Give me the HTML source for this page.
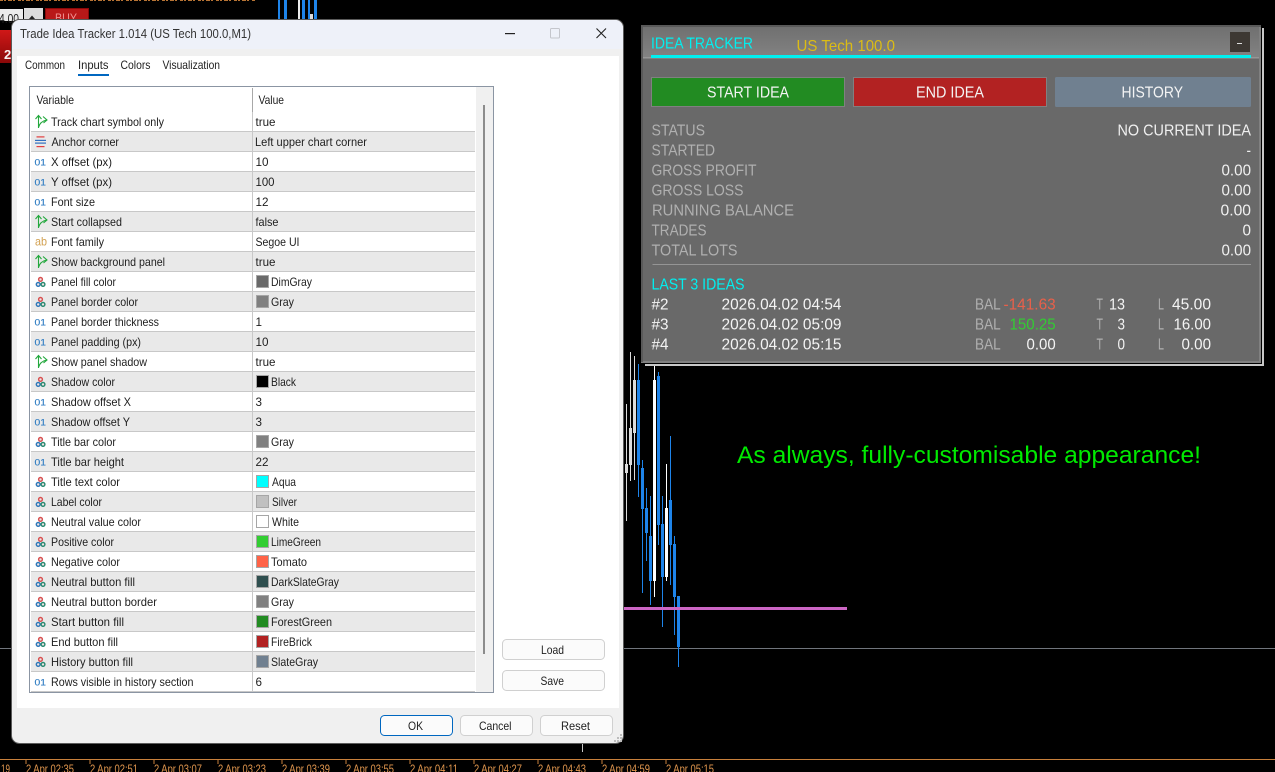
<!DOCTYPE html>
<html lang="en"><head><meta charset="utf-8"><title>Trade Idea Tracker</title>
<style>
html,body{margin:0;padding:0;background:#000;width:1275px;height:772px;overflow:hidden}
svg{display:block}
text{font-family:"Liberation Sans",sans-serif;white-space:pre}
.d{font-size:12px;fill:#1e1e1e}
.o{font-size:9.5px;fill:#2878c0;stroke:#2878c0;stroke-width:.1}
.a{font-size:12px;fill:#d2a050}
.p{font-size:16px;fill:#b0b0b0}
.v{font-size:16px;fill:#f0f0f0}
.q{font-size:16px;fill:#f4f4f4}
.x{font-size:11.5px;fill:#e0964e}
</style></head>
<body>
<svg xmlns="http://www.w3.org/2000/svg" width="1275" height="772" viewBox="0 0 1275 772">
<defs>
<linearGradient id="tb" x1="0" y1="0" x2="0" y2="1"><stop offset="0" stop-color="#707070"/><stop offset="1" stop-color="#828282"/></linearGradient>
<linearGradient id="rd" x1="0" y1="0" x2="0" y2="1"><stop offset="0" stop-color="#d01818"/><stop offset="1" stop-color="#8a0808"/></linearGradient>
<pattern id="rows" x="0" y="112" width="10" height="40" patternUnits="userSpaceOnUse">
<rect width="10" height="19" fill="#fff"/><rect y="19" width="10" height="1" fill="#c8c8c8"/><rect y="20" width="10" height="19" fill="#e9e9e9"/><rect y="39" width="10" height="1" fill="#c8c8c8"/>
</pattern>
<g id="b" fill="none" stroke="#22a83c" stroke-width="1.1"><path d="M38.5 6V-6M35.5 -3L38.5 -6.5L41.5 -3M38.5 5.5Q40 -0.5 46.5 -2M43 -5.5L47 -2L43.5 1"/></g>
<g id="e"><rect x="36.5" y="-5.7" width="8" height="1.2" fill="#e04040"/><rect x="35" y="-2.2" width="11" height="1.2" fill="#3070c0"/><rect x="35" y="0.5" width="11" height="1.2" fill="#3070c0"/><rect x="36.5" y="4" width="8" height="1.2" fill="#e04040"/></g>
<g id="c" fill="#f0e4e4" stroke-width="1.4"><circle cx="40.5" cy="-2.6" r="1.9" stroke="#d85050"/><circle cx="38.2" cy="2.4" r="1.9" stroke="#2e78b8"/><circle cx="43" cy="2.4" r="1.9" stroke="#2a8a70"/></g>
</defs>

<rect width="1275" height="772" fill="#000"/>

<!-- top chart remnants -->
<path d="M0 0.5H255" stroke="#b87434" stroke-width="1" stroke-dasharray="3 1 2 2 4 1 2 3"/>
<rect x="0" y="9" width="23" height="12" fill="#ececec"/>
<rect x="24" y="8" width="19" height="13" fill="#dcdcdc"/>
<path d="M29 19L32 15.5L35 19Z" fill="#222"/>
<rect x="45.5" y="8.5" width="43" height="13" fill="#b81818" stroke="#8a0808"/>
<text x="55" y="22" font-size="12" fill="#f09090" textLength="22" lengthAdjust="spacingAndGlyphs">BUY</text>
<text x="-1" y="23" font-size="13" fill="#222" textLength="20" lengthAdjust="spacingAndGlyphs">4.00</text>
<rect x="0" y="30" width="11" height="33" fill="url(#rd)"/>
<text x="4" y="59" font-size="13" font-weight="bold" fill="#f8f0f0">2</text>
<rect x="278" y="0" width="2" height="19" fill="#1e84ea"/><rect x="284" y="0" width="3" height="19" fill="#1e84ea"/><rect x="298" y="0" width="2" height="19" fill="#eee"/><rect x="302" y="0" width="3" height="19" fill="#1e84ea"/><rect x="308" y="0" width="2" height="19" fill="#1e84ea"/><rect x="314" y="0" width="3" height="19" fill="#1e84ea"/><rect x="310" y="14" width="3" height="5" fill="#ddd"/>

<!-- chart lines -->
<rect x="0" y="648" width="1275" height="1" fill="#70757c"/>

<!-- candles -->
<g fill="#dcdcdc">
<rect x="626" y="404" width="1" height="117"/><rect x="625" y="464" width="3" height="9"/>
<rect x="630" y="352" width="1" height="129"/><rect x="629" y="428" width="3" height="37"/>
<rect x="634" y="356" width="1" height="124"/><rect x="633" y="380" width="3" height="53"/>
</g>
<g fill="#fff">
<rect x="654" y="364" width="1" height="233"/><rect x="653" y="380" width="3" height="201"/>
<rect x="666" y="464" width="1" height="117"/><rect x="665" y="508" width="3" height="69"/>
</g>
<g fill="#1e84ea">
<rect x="638" y="364" width="1" height="133"/><rect x="637" y="380" width="3" height="85"/>
<rect x="642" y="460" width="1" height="133"/><rect x="641" y="468" width="3" height="41"/>
<rect x="646" y="488" width="1" height="73"/><rect x="645" y="508" width="3" height="25"/>
<rect x="650" y="496" width="1" height="109"/><rect x="649" y="536" width="3" height="45"/>
<rect x="658" y="372" width="1" height="173"/><rect x="657" y="376" width="3" height="149"/>
<rect x="662" y="496" width="1" height="131"/><rect x="661" y="524" width="3" height="53"/>
<rect x="670" y="436" width="1" height="149"/><rect x="669" y="500" width="3" height="45"/>
<rect x="674" y="536" width="1" height="99"/><rect x="673" y="544" width="3" height="53"/>
<rect x="678" y="596" width="1" height="71"/><rect x="677" y="596" width="3" height="51"/>
</g>
<rect x="624" y="607" width="223" height="3" fill="#cc66c4"/>

<text x="737" y="463" font-size="24" fill="#00ea00" textLength="464" lengthAdjust="spacingAndGlyphs">As always, fully-customisable appearance!</text>

<!-- axis -->
<rect x="582" y="744" width="1" height="8" fill="#c8c8c8"/>
<rect x="0" y="759" width="1275" height="1" fill="#c8803c"/>
<path d="M26 759v5M90 759v5M154 759v5M218 759v5M282 759v5M346 759v5M410 759v5M474 759v5M538 759v5M602 759v5M666 759v5" stroke="#c8803c" stroke-width="1"/>
<text class="x" x="1" y="773" textLength="9" lengthAdjust="spacingAndGlyphs">19</text>
<text class="x" x="26" y="773" textLength="48" lengthAdjust="spacingAndGlyphs">2 Apr 02:35</text>
<text class="x" x="90" y="773" textLength="48" lengthAdjust="spacingAndGlyphs">2 Apr 02:51</text>
<text class="x" x="154" y="773" textLength="48" lengthAdjust="spacingAndGlyphs">2 Apr 03:07</text>
<text class="x" x="218" y="773" textLength="48" lengthAdjust="spacingAndGlyphs">2 Apr 03:23</text>
<text class="x" x="282" y="773" textLength="48" lengthAdjust="spacingAndGlyphs">2 Apr 03:39</text>
<text class="x" x="346" y="773" textLength="48" lengthAdjust="spacingAndGlyphs">2 Apr 03:55</text>
<text class="x" x="410" y="773" textLength="48" lengthAdjust="spacingAndGlyphs">2 Apr 04:11</text>
<text class="x" x="474" y="773" textLength="48" lengthAdjust="spacingAndGlyphs">2 Apr 04:27</text>
<text class="x" x="538" y="773" textLength="48" lengthAdjust="spacingAndGlyphs">2 Apr 04:43</text>
<text class="x" x="602" y="773" textLength="48" lengthAdjust="spacingAndGlyphs">2 Apr 04:59</text>
<text class="x" x="666" y="773" textLength="48" lengthAdjust="spacingAndGlyphs">2 Apr 05:15</text>

<!-- dialog -->
<rect x="11.5" y="19.5" width="612" height="724" rx="8" fill="#f0f0f0" stroke="#5a5a5a"/>
<path d="M12 49V28a8 8 0 0 1 8-8H615a8 8 0 0 1 8 8V49Z" fill="#eef1f9"/>
<rect x="17" y="56" width="602" height="652" fill="#fff"/>
<text x="20" y="38" font-size="12.5" fill="#333" textLength="231" lengthAdjust="spacingAndGlyphs">Trade Idea Tracker 1.014 (US Tech 100.0,M1)</text>
<rect x="505" y="33" width="10" height="1.2" fill="#222"/>
<rect x="550.5" y="28.5" width="9" height="9.5" rx="1" fill="none" stroke="#c4c6cc"/>
<path d="M596.5 28.5L606 38M606 28.5L596.5 38" stroke="#222" stroke-width="1.1" fill="none"/>

<text class="d" x="25" y="69" textLength="40" lengthAdjust="spacingAndGlyphs">Common</text>
<text class="d" x="78" y="69" textLength="30.5" lengthAdjust="spacingAndGlyphs">Inputs</text>
<text class="d" x="120.5" y="69" textLength="30" lengthAdjust="spacingAndGlyphs">Colors</text>
<text class="d" x="162.5" y="69" textLength="57.5" lengthAdjust="spacingAndGlyphs">Visualization</text>
<rect x="78" y="74" width="31" height="2" fill="#0067c0"/>

<!-- table -->
<rect x="29.5" y="86.5" width="464" height="606" fill="#fff" stroke="#8b95a3"/>
<rect x="476" y="87" width="17" height="605" fill="#f0f0f0"/>
<rect x="483" y="105" width="2" height="549" fill="#8c8c8c"/>
<rect x="31" y="112" width="444" height="580" fill="url(#rows)"/>
<rect x="252" y="88" width="1" height="24" fill="#a8a8a8"/>
<rect x="252" y="112" width="1" height="580" fill="#c8c8c8"/>
<text class="d" x="36.5" y="104" textLength="37.5" lengthAdjust="spacingAndGlyphs">Variable</text>
<text class="d" x="258.5" y="104" textLength="25.5" lengthAdjust="spacingAndGlyphs">Value</text>

<!-- row labels -->
<use href="#b" y="122"/><text class="d" x="51" y="126" textLength="113" lengthAdjust="spacingAndGlyphs">Track chart symbol only</text>
<use href="#e" y="142"/><text class="d" x="51.5" y="146" textLength="67.5" lengthAdjust="spacingAndGlyphs">Anchor corner</text>
<text class="o" x="34.5" y="165.5" textLength="11.5" lengthAdjust="spacingAndGlyphs">01</text><text class="d" x="51" y="166" textLength="61" lengthAdjust="spacingAndGlyphs">X offset (px)</text>
<text class="o" x="34.5" y="185.5" textLength="11.5" lengthAdjust="spacingAndGlyphs">01</text><text class="d" x="51" y="186" textLength="61" lengthAdjust="spacingAndGlyphs">Y offset (px)</text>
<text class="o" x="34.5" y="205.5" textLength="11.5" lengthAdjust="spacingAndGlyphs">01</text><text class="d" x="51" y="206" textLength="44" lengthAdjust="spacingAndGlyphs">Font size</text>
<use href="#b" y="222"/><text class="d" x="51" y="226" textLength="71" lengthAdjust="spacingAndGlyphs">Start collapsed</text>
<text class="a" x="35" y="245.5" textLength="12" lengthAdjust="spacingAndGlyphs">ab</text><text class="d" x="51" y="246" textLength="53" lengthAdjust="spacingAndGlyphs">Font family</text>
<use href="#b" y="262"/><text class="d" x="51" y="266" textLength="114" lengthAdjust="spacingAndGlyphs">Show background panel</text>
<use href="#c" y="282"/><text class="d" x="51" y="286" textLength="65" lengthAdjust="spacingAndGlyphs">Panel fill color</text>
<use href="#c" y="302"/><text class="d" x="51" y="306" textLength="87" lengthAdjust="spacingAndGlyphs">Panel border color</text>
<text class="o" x="34.5" y="325.5" textLength="11.5" lengthAdjust="spacingAndGlyphs">01</text><text class="d" x="51" y="326" textLength="108" lengthAdjust="spacingAndGlyphs">Panel border thickness</text>
<text class="o" x="34.5" y="345.5" textLength="11.5" lengthAdjust="spacingAndGlyphs">01</text><text class="d" x="51" y="346" textLength="90" lengthAdjust="spacingAndGlyphs">Panel padding (px)</text>
<use href="#b" y="362"/><text class="d" x="51" y="366" textLength="96" lengthAdjust="spacingAndGlyphs">Show panel shadow</text>
<use href="#c" y="382"/><text class="d" x="51" y="386" textLength="64" lengthAdjust="spacingAndGlyphs">Shadow color</text>
<text class="o" x="34.5" y="405.5" textLength="11.5" lengthAdjust="spacingAndGlyphs">01</text><text class="d" x="51" y="406" textLength="80" lengthAdjust="spacingAndGlyphs">Shadow offset X</text>
<text class="o" x="34.5" y="425.5" textLength="11.5" lengthAdjust="spacingAndGlyphs">01</text><text class="d" x="51" y="426" textLength="79" lengthAdjust="spacingAndGlyphs">Shadow offset Y</text>
<use href="#c" y="442"/><text class="d" x="51" y="446" textLength="65" lengthAdjust="spacingAndGlyphs">Title bar color</text>
<text class="o" x="34.5" y="465.5" textLength="11.5" lengthAdjust="spacingAndGlyphs">01</text><text class="d" x="51" y="466" textLength="73" lengthAdjust="spacingAndGlyphs">Title bar height</text>
<use href="#c" y="482"/><text class="d" x="51" y="486" textLength="69" lengthAdjust="spacingAndGlyphs">Title text color</text>
<use href="#c" y="502"/><text class="d" x="51" y="506" textLength="51" lengthAdjust="spacingAndGlyphs">Label color</text>
<use href="#c" y="522"/><text class="d" x="51" y="526" textLength="90" lengthAdjust="spacingAndGlyphs">Neutral value color</text>
<use href="#c" y="542"/><text class="d" x="51" y="546" textLength="63" lengthAdjust="spacingAndGlyphs">Positive color</text>
<use href="#c" y="562"/><text class="d" x="51" y="566" textLength="69" lengthAdjust="spacingAndGlyphs">Negative color</text>
<use href="#c" y="582"/><text class="d" x="51" y="586" textLength="84" lengthAdjust="spacingAndGlyphs">Neutral button fill</text>
<use href="#c" y="602"/><text class="d" x="51" y="606" textLength="106" lengthAdjust="spacingAndGlyphs">Neutral button border</text>
<use href="#c" y="622"/><text class="d" x="51" y="626" textLength="73" lengthAdjust="spacingAndGlyphs">Start button fill</text>
<use href="#c" y="642"/><text class="d" x="51" y="646" textLength="67" lengthAdjust="spacingAndGlyphs">End button fill</text>
<use href="#c" y="662"/><text class="d" x="51" y="666" textLength="82" lengthAdjust="spacingAndGlyphs">History button fill</text>
<text class="o" x="34.5" y="685.5" textLength="11.5" lengthAdjust="spacingAndGlyphs">01</text><text class="d" x="51" y="686" textLength="142.5" lengthAdjust="spacingAndGlyphs">Rows visible in history section</text>

<!-- values -->
<text class="d" x="255.5" y="126" textLength="20" lengthAdjust="spacingAndGlyphs">true</text>
<text class="d" x="255" y="146" textLength="112" lengthAdjust="spacingAndGlyphs">Left upper chart corner</text>
<text class="d" x="255.5" y="166" textLength="13" lengthAdjust="spacingAndGlyphs">10</text>
<text class="d" x="255.5" y="186" textLength="19" lengthAdjust="spacingAndGlyphs">100</text>
<text class="d" x="255.5" y="206" textLength="13" lengthAdjust="spacingAndGlyphs">12</text>
<text class="d" x="255.5" y="226" textLength="23" lengthAdjust="spacingAndGlyphs">false</text>
<text class="d" x="255.5" y="246" textLength="44" lengthAdjust="spacingAndGlyphs">Segoe UI</text>
<text class="d" x="255.5" y="266" textLength="20" lengthAdjust="spacingAndGlyphs">true</text>
<text class="d" x="271" y="286" textLength="41" lengthAdjust="spacingAndGlyphs">DimGray</text>
<text class="d" x="271" y="306" textLength="23" lengthAdjust="spacingAndGlyphs">Gray</text>
<text class="d" x="255.5" y="326" textLength="6.5" lengthAdjust="spacingAndGlyphs">1</text>
<text class="d" x="255.5" y="346" textLength="13" lengthAdjust="spacingAndGlyphs">10</text>
<text class="d" x="255.5" y="366" textLength="20" lengthAdjust="spacingAndGlyphs">true</text>
<text class="d" x="271" y="386" textLength="25" lengthAdjust="spacingAndGlyphs">Black</text>
<text class="d" x="255.5" y="406" textLength="6.5" lengthAdjust="spacingAndGlyphs">3</text>
<text class="d" x="255.5" y="426" textLength="6.5" lengthAdjust="spacingAndGlyphs">3</text>
<text class="d" x="271" y="446" textLength="23" lengthAdjust="spacingAndGlyphs">Gray</text>
<text class="d" x="255.5" y="466" textLength="13" lengthAdjust="spacingAndGlyphs">22</text>
<text class="d" x="272" y="486" textLength="24" lengthAdjust="spacingAndGlyphs">Aqua</text>
<text class="d" x="272" y="506" textLength="25" lengthAdjust="spacingAndGlyphs">Silver</text>
<text class="d" x="272" y="526" textLength="27" lengthAdjust="spacingAndGlyphs">White</text>
<text class="d" x="271" y="546" textLength="50" lengthAdjust="spacingAndGlyphs">LimeGreen</text>
<text class="d" x="271" y="566" textLength="36" lengthAdjust="spacingAndGlyphs">Tomato</text>
<text class="d" x="271" y="586" textLength="68" lengthAdjust="spacingAndGlyphs">DarkSlateGray</text>
<text class="d" x="271" y="606" textLength="23" lengthAdjust="spacingAndGlyphs">Gray</text>
<text class="d" x="271" y="626" textLength="61" lengthAdjust="spacingAndGlyphs">ForestGreen</text>
<text class="d" x="271" y="646" textLength="41" lengthAdjust="spacingAndGlyphs">FireBrick</text>
<text class="d" x="271" y="666" textLength="47" lengthAdjust="spacingAndGlyphs">SlateGray</text>
<text class="d" x="255.5" y="686" textLength="6.5" lengthAdjust="spacingAndGlyphs">6</text>

<!-- swatches -->
<g stroke="#a6a6a6">
<rect x="256.5" y="275.5" width="12" height="12" fill="#696969"/>
<rect x="256.5" y="295.5" width="12" height="12" fill="#808080"/>
<rect x="256.5" y="375.5" width="12" height="12" fill="#000"/>
<rect x="256.5" y="435.5" width="12" height="12" fill="#808080"/>
<rect x="256.5" y="475.5" width="12" height="12" fill="#0ff"/>
<rect x="256.5" y="495.5" width="12" height="12" fill="#c0c0c0"/>
<rect x="256.5" y="515.5" width="12" height="12" fill="#fff"/>
<rect x="256.5" y="535.5" width="12" height="12" fill="#32cd32"/>
<rect x="256.5" y="555.5" width="12" height="12" fill="#ff6347"/>
<rect x="256.5" y="575.5" width="12" height="12" fill="#2f4f4f"/>
<rect x="256.5" y="595.5" width="12" height="12" fill="#808080"/>
<rect x="256.5" y="615.5" width="12" height="12" fill="#228b22"/>
<rect x="256.5" y="635.5" width="12" height="12" fill="#b22222"/>
<rect x="256.5" y="655.5" width="12" height="12" fill="#708090"/>
</g>

<!-- dialog buttons -->
<g fill="#fbfbfb" stroke="#d0d0d0">
<rect x="502.5" y="639.5" width="102" height="20" rx="4"/>
<rect x="502.5" y="670.5" width="102" height="20" rx="4"/>
<rect x="460.5" y="715.5" width="72" height="20" rx="4"/>
<rect x="540.5" y="715.5" width="72" height="20" rx="4"/>
</g>
<rect x="380.5" y="715.5" width="72" height="20" rx="4" fill="#fbfbfb" stroke="#0067c0"/>
<text class="d" x="541" y="654" textLength="23" lengthAdjust="spacingAndGlyphs">Load</text>
<text class="d" x="540.5" y="685" textLength="23.5" lengthAdjust="spacingAndGlyphs">Save</text>
<text class="d" x="408" y="730" textLength="15" lengthAdjust="spacingAndGlyphs">OK</text>
<text class="d" x="479" y="730" textLength="32.5" lengthAdjust="spacingAndGlyphs">Cancel</text>
<text class="d" x="561" y="730" textLength="29" lengthAdjust="spacingAndGlyphs">Reset</text>
<g fill="#bdbdbd"><rect x="620" y="734" width="2" height="2"/><rect x="617" y="737" width="2" height="2"/><rect x="620" y="737" width="2" height="2"/><rect x="614" y="740" width="2" height="2"/><rect x="617" y="740" width="2" height="2"/><rect x="620" y="740" width="2" height="2"/></g>

<!-- panel shadow -->
<rect x="1262" y="28" width="2" height="338" fill="#c8c8c8"/>
<rect x="645" y="364" width="619" height="2" fill="#c8c8c8"/>
<!-- panel -->
<rect x="641" y="25" width="620" height="338" fill="#808080"/>
<rect x="641" y="25" width="620" height="2" fill="#595959"/>
<rect x="641" y="25" width="2" height="337" fill="#595959"/>
<rect x="643" y="58" width="616" height="303" fill="#696969"/>
<rect x="643" y="27" width="616" height="30" fill="url(#tb)"/>
<rect x="643" y="57" width="616" height="1.5" fill="#969696"/>
<rect x="651" y="55" width="600" height="3" fill="#00f0f0"/>
<text x="651" y="48.5" font-size="16" fill="#00f0f0" textLength="102" lengthAdjust="spacingAndGlyphs">IDEA TRACKER</text>
<text x="796.5" y="51" font-size="16" fill="#dcbc14" textLength="98.5" lengthAdjust="spacingAndGlyphs">US Tech 100.0</text>
<rect x="1230" y="32" width="20" height="20" fill="#3d3833"/>
<rect x="1237" y="43" width="5" height="1" fill="#ddd"/>

<rect x="651.5" y="77.5" width="193" height="29" fill="#228b22" stroke="#808080"/>
<rect x="853.5" y="77.5" width="193" height="29" fill="#b22222" stroke="#808080"/>
<rect x="1055.5" y="77.5" width="195" height="29" rx="1" fill="#708090" stroke="#708090"/>
<g transform="translate(0,-0.7)">
<text x="707" y="98" font-size="16" fill="#f4f4f4" textLength="82" lengthAdjust="spacingAndGlyphs">START IDEA</text>
<text x="916" y="98" font-size="16" fill="#f4f4f4" textLength="68" lengthAdjust="spacingAndGlyphs">END IDEA</text>
<text x="1121.5" y="98" font-size="16" fill="#f4f4f4" textLength="61.5" lengthAdjust="spacingAndGlyphs">HISTORY</text>

<text class="p" x="651.5" y="136" textLength="53.5" lengthAdjust="spacingAndGlyphs">STATUS</text>
<text class="p" x="651.5" y="156" textLength="63.5" lengthAdjust="spacingAndGlyphs">STARTED</text>
<text class="p" x="651.5" y="176" textLength="105" lengthAdjust="spacingAndGlyphs">GROSS PROFIT</text>
<text class="p" x="651.5" y="196" textLength="92" lengthAdjust="spacingAndGlyphs">GROSS LOSS</text>
<text class="p" x="652" y="216" textLength="142" lengthAdjust="spacingAndGlyphs">RUNNING BALANCE</text>
<text class="p" x="651.5" y="236" textLength="55" lengthAdjust="spacingAndGlyphs">TRADES</text>
<text class="p" x="651.5" y="256" textLength="86" lengthAdjust="spacingAndGlyphs">TOTAL LOTS</text>

<text class="v" x="1117.5" y="136" textLength="133.5" lengthAdjust="spacingAndGlyphs">NO CURRENT IDEA</text>
<text class="v" x="1246.5" y="156" textLength="4.5" lengthAdjust="spacingAndGlyphs">-</text>
<text class="v" x="1221.5" y="176" textLength="29.5" lengthAdjust="spacingAndGlyphs">0.00</text>
<text class="v" x="1221.5" y="196" textLength="29.5" lengthAdjust="spacingAndGlyphs">0.00</text>
<text class="v" x="1220.5" y="216" textLength="30.5" lengthAdjust="spacingAndGlyphs">0.00</text>
<text class="v" x="1242.5" y="236" textLength="8.5" lengthAdjust="spacingAndGlyphs">0</text>
<text class="v" x="1221.5" y="256" textLength="29.5" lengthAdjust="spacingAndGlyphs">0.00</text>

<text x="651.5" y="290" font-size="16" fill="#00f0f0" textLength="93" lengthAdjust="spacingAndGlyphs">LAST 3 IDEAS</text>

<text class="q" x="651.5" y="310" textLength="17" lengthAdjust="spacingAndGlyphs">#2</text>
<text class="q" x="721.5" y="310" textLength="120" lengthAdjust="spacingAndGlyphs">2026.04.02 04:54</text>
<text class="p" x="975" y="310" textLength="25.7" lengthAdjust="spacingAndGlyphs">BAL</text>
<text x="1003.5" y="310" font-size="16" fill="#e8604a" textLength="52.2" lengthAdjust="spacingAndGlyphs">-141.63</text>
<text class="p" x="1096.5" y="310" textLength="6.5" lengthAdjust="spacingAndGlyphs">T</text>
<text class="q" x="1109" y="310" textLength="16" lengthAdjust="spacingAndGlyphs">13</text>
<text class="p" x="1158" y="310" textLength="6" lengthAdjust="spacingAndGlyphs">L</text>
<text class="q" x="1172" y="310" textLength="39" lengthAdjust="spacingAndGlyphs">45.00</text>

<text class="q" x="651.5" y="330" textLength="17" lengthAdjust="spacingAndGlyphs">#3</text>
<text class="q" x="721.5" y="330" textLength="120" lengthAdjust="spacingAndGlyphs">2026.04.02 05:09</text>
<text class="p" x="975" y="330" textLength="25.7" lengthAdjust="spacingAndGlyphs">BAL</text>
<text x="1009.5" y="330" font-size="16" fill="#32cd32" textLength="46.2" lengthAdjust="spacingAndGlyphs">150.25</text>
<text class="p" x="1096.5" y="330" textLength="6.5" lengthAdjust="spacingAndGlyphs">T</text>
<text class="q" x="1117.5" y="330" textLength="7.5" lengthAdjust="spacingAndGlyphs">3</text>
<text class="p" x="1158" y="330" textLength="6" lengthAdjust="spacingAndGlyphs">L</text>
<text class="q" x="1173.5" y="330" textLength="37.5" lengthAdjust="spacingAndGlyphs">16.00</text>

<text class="q" x="651.5" y="350" textLength="17" lengthAdjust="spacingAndGlyphs">#4</text>
<text class="q" x="721.5" y="350" textLength="120" lengthAdjust="spacingAndGlyphs">2026.04.02 05:15</text>
<text class="p" x="975" y="350" textLength="25.7" lengthAdjust="spacingAndGlyphs">BAL</text>
<text class="q" x="1026.5" y="350" textLength="29.2" lengthAdjust="spacingAndGlyphs">0.00</text>
<text class="p" x="1096.5" y="350" textLength="6.5" lengthAdjust="spacingAndGlyphs">T</text>
<text class="q" x="1117.5" y="350" textLength="7.5" lengthAdjust="spacingAndGlyphs">0</text>
<text class="p" x="1158" y="350" textLength="6" lengthAdjust="spacingAndGlyphs">L</text>
<text class="q" x="1181.5" y="350" textLength="29.5" lengthAdjust="spacingAndGlyphs">0.00</text>
</g>
<rect x="652.5" y="264" width="598.5" height="1" fill="#959595"/>
</svg>
</body></html>
